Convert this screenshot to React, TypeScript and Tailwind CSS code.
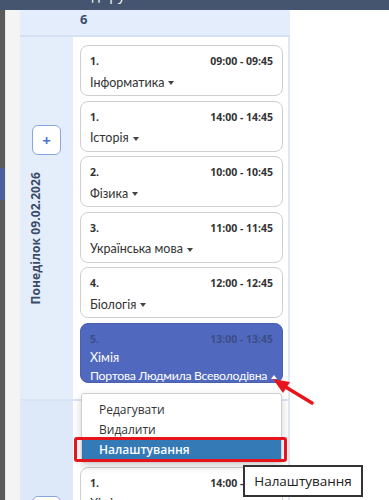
import React from 'react';

interface Lesson {
  num: string;
  time: string;
  subject: string;
}

const lessons: Lesson[] = [
  { num: '1.', time: '09:00 - 09:45', subject: 'Інформатика' },
  { num: '1.', time: '14:00 - 14:45', subject: 'Історія' },
  { num: '2.', time: '10:00 - 10:45', subject: 'Фізика' },
  { num: '3.', time: '11:00 - 11:45', subject: 'Українська мова' },
  { num: '4.', time: '12:00 - 12:45', subject: 'Біологія' },
];

function Caret({ up, color }: { up?: boolean; color: string }) {
  return (
    <span
      className={`inline-block w-0 h-0 ml-[4px] align-middle border-x-[3.5px] border-x-transparent ${
        up ? 'border-b-[4px]' : 'border-t-[4px]'
      } ${color}`}
    />
  );
}

function LessonCard({ lesson }: { lesson: Lesson }) {
  return (
    <div className="h-[51px] rounded-[8px] border border-[#cfcfcf] bg-white px-[9px] pt-[8px] text-[#333]">
      <div className="flex items-center justify-between h-[16px] text-[10.5px] font-bold">
        <span>{lesson.num}</span>
        <span>{lesson.time}</span>
      </div>
      <div className="mt-[4px] h-[18px] flex items-center text-[12.5px] font-['Lato',sans-serif] whitespace-nowrap">
        {lesson.subject}
        <Caret color="border-t-[#444]" />
      </div>
    </div>
  );
}

function PlusButton() {
  return (
    <div className="w-[29px] h-[30px] shrink-0 rounded-[6px] border border-[#8aa5e4] bg-white flex items-center justify-center text-[#4a72d6] text-[15px] font-bold leading-none">
      +
    </div>
  );
}

export default function App() {
  return (
    <div className="relative w-[389px] h-[500px] overflow-hidden bg-white font-['Open_Sans',sans-serif]">
      {/* top bar, mostly scrolled out */}
      <div className="h-[10px] bg-[#45556f] overflow-hidden">
        <p className="-mt-[16px] ml-[45px] text-[14px] text-white">Розклад групи</p>
      </div>

      <div className="flex">
        {/* window edge */}
        <div className="w-[5px] shrink-0 bg-[#5a5a5a] flex flex-col">
          <div className="h-[158px]" />
          <div className="h-[32px] bg-[#4c5f9c]" />
        </div>
        <div className="w-[15px] shrink-0 bg-[#f4f4f4] border-l border-[#e6e6e6]" />

        {/* schedule table */}
        <div className="w-[270px] shrink-0">
          <div className="h-[25px] bg-[#e3edfb] flex">
            <div className="w-[53px] shrink-0" />
            <div className="pl-[7px] text-[13px] font-bold text-[#3b4e6e] leading-[18px]">6</div>
          </div>
          <div className="h-[2px] bg-[#d5e1f3]" />

          <div className="flex">
            <div className="w-[53px] shrink-0 bg-[#e4eefb] flex flex-col items-center justify-center gap-[17px] pb-[6px]">
              <PlusButton />
              <div className="self-start ml-[8px] [writing-mode:vertical-rl] rotate-180 text-[12px] font-bold text-[#3b4a68] leading-[16px] tracking-[0.1px]">
                Понеділок 09.02.2026
              </div>
            </div>
            <div className="flex-1 min-w-0 bg-white border-r-2 border-[#e1e8f3] pl-[7px] pr-[5px] pt-[8px] pb-[16px] flex flex-col gap-[4.5px]">
              {lessons.map((l, i) => (
                <LessonCard key={i} lesson={l} />
              ))}
              <div className="h-[60px] rounded-[8px] border border-[#4a60b0] bg-[#5069bf] px-[9px] pt-[8px]">
                <div className="flex items-center justify-between h-[16px] text-[10.5px] font-bold text-[#3d4d86]">
                  <span>5.</span>
                  <span>13:00 - 13:45</span>
                </div>
                <div className="mt-[3px] h-[16px] flex items-center text-[12.5px] font-['Lato',sans-serif] text-white">Хімія</div>
                <div className="mt-[2px] h-[16px] flex items-center text-[12.3px] tracking-[-0.3px] font-['Lato',sans-serif] text-white whitespace-nowrap">
                  Портова Людмила Всеволодівна
                  <Caret up color="border-b-white" />
                </div>
              </div>
            </div>
          </div>

          <div className="h-[2px] bg-[#d9e4f5]" />

          <div className="flex h-[120px]">
            <div className="w-[53px] shrink-0 bg-[#dde8f8] flex flex-col items-center pt-[95px]">
              <PlusButton />
            </div>
            <div className="flex-1 min-w-0 bg-white border-r-2 border-[#e1e8f3] pl-[7px] pr-[5px] pt-[66px]">
              <div className="h-[51px] rounded-[8px] border border-[#cfcfcf] bg-white px-[9px] pt-[8px] text-[#333]">
                <div className="flex items-center justify-between h-[16px] text-[10.5px] font-bold">
                  <span>1.</span>
                  <span>14:00 - 14:45</span>
                </div>
                <div className="mt-[4px] h-[18px] flex items-center text-[12.5px] font-['Lato',sans-serif]">Хімія</div>
              </div>
            </div>
          </div>
        </div>
      </div>

      {/* dropdown menu */}
      <div className="absolute left-[81px] top-[393px] w-[201px] h-[70px] bg-white border border-[#cfcfcf] rounded-[3px] shadow-[0_3px_8px_rgba(0,0,0,0.18)] pt-[6px] text-[12px] text-[#333]">
        <div className="h-[20px] flex items-center pl-[17px]">Редагувати</div>
        <div className="h-[20px] flex items-center pl-[17px]">Видалити</div>
        <div className="h-[19px] flex items-center pl-[17px] bg-[#337ab7] text-white font-semibold">Налаштування</div>
      </div>
      <div className="absolute left-[74px] top-[437px] w-[213px] h-[25px] border-[3px] border-[#e5141d] rounded-[3px]" />

      {/* tooltip */}
      <div className="absolute left-[243px] top-[465px] w-[120px] h-[32px] bg-white border-2 border-[#333] flex items-center justify-center text-[13.5px] text-[#222]">
        Налаштування
      </div>

      {/* annotation arrow */}
      <svg className="absolute left-0 top-0" width="389" height="500" viewBox="0 0 389 500">
        <line x1="312" y1="403" x2="284" y2="386" stroke="#e8141b" strokeWidth="3.5" strokeLinecap="round" />
        <polygon points="273,379 290,382 283,393" fill="#e8141b" />
      </svg>
    </div>
  );
}
